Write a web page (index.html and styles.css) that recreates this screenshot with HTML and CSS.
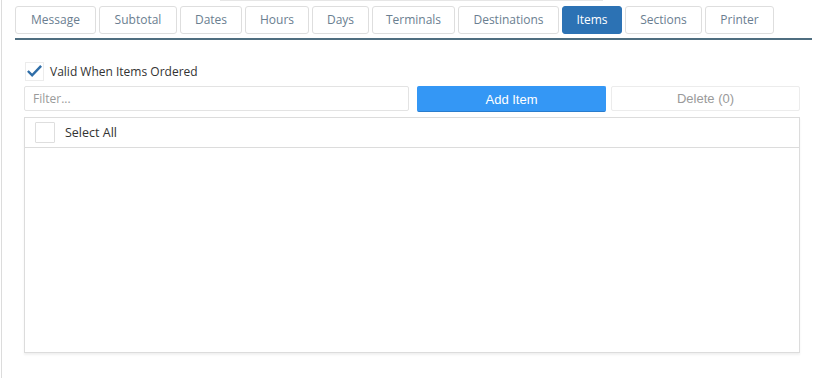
FILE: index.html
```html
<!DOCTYPE html>
<html lang="en">
<head>
    <meta charset="UTF-8">
    <meta name="viewport" content="width=device-width, initial-scale=1.0">
    <title>Items</title>
    <link rel="stylesheet" href="styles.css">
</head>
<body>
    <div class="page">
        <div class="top-edge"></div>
        <div class="tabs">
            <div class="tab">Message</div>
            <div class="tab">Subtotal</div>
            <div class="tab">Dates</div>
            <div class="tab">Hours</div>
            <div class="tab">Days</div>
            <div class="tab">Terminals</div>
            <div class="tab">Destinations</div>
            <div class="tab active">Items</div>
            <div class="tab">Sections</div>
            <div class="tab">Printer</div>
        </div>

        <div class="panel">
            <label class="check-row">
                <span class="check">
                    <svg width="18" height="16" viewBox="0 0 18 16"><path d="M2 8 L6.5 12.5 L16 2.5" fill="none" stroke="#2f6ea8" stroke-width="2.6"/></svg>
                </span>
                Valid When Items Ordered
            </label>

            <div class="toolbar">
                <input type="text" class="filter" placeholder="Filter...">
                <button class="btn btn-add">Add Item</button>
                <button class="btn btn-delete">Delete (0)</button>
            </div>

            <div class="list">
                <div class="list-head">
                    <span class="box"></span>
                    Select All
                </div>
                <div class="list-body"></div>
            </div>
        </div>
    </div>
</body>
</html>
```

FILE: styles.css
```css
body {
    margin: 0;
    padding: 0;
    font-family: "Open Sans", "Noto Sans", sans-serif;
    background: #fff;
}
.page {
    height: 378px;
    margin-left: 1px;
    border-left: 1px solid #dcdcdc;
    box-sizing: border-box;
}
.top-edge {
    height: 1px;
    width: 383px;
    margin-left: 218px;
    background: #e6e6e6;
}
.tabs {
    display: flex;
    gap: 3px;
    margin: 5px 11px 0 13px;
    padding-bottom: 4px;
    border-bottom: 2px solid #4f6e80;
}
.tab {
    height: 28px;
    line-height: 26px;
    box-sizing: border-box;
    padding: 0;
    border: 1px solid #dedede;
    border-radius: 3px;
    font-size: 12px;
    text-align: center;
    color: #6a7e90;
}
.tab:nth-child(1) { width: 81px; }
.tab:nth-child(2) { width: 78px; }
.tab:nth-child(3) { width: 62px; }
.tab:nth-child(4) { width: 64px; }
.tab:nth-child(5) { width: 57px; }
.tab:nth-child(6) { width: 83px; }
.tab:nth-child(7) { width: 101px; }
.tab:nth-child(8) { width: 60px; }
.tab:nth-child(9) { width: 77px; }
.tab:nth-child(10) { width: 69px; }
.tab.active {
    background: #2c72b4;
    border-color: #2c72b4;
    color: #fff;
}
.panel {
    padding: 0 0 0 22px;
    width: 776px;
}
.check-row {
    display: flex;
    align-items: center;
    gap: 6px;
    margin-top: 22px;
    height: 18px;
    font-size: 12px;
    color: #333;
}
.check {
    width: 19px;
    height: 19px;
    margin-left: 1px;
    box-sizing: border-box;
    border: 1px solid #ececec;
    display: flex;
    align-items: center;
    justify-content: center;
}
.toolbar {
    display: grid;
    grid-template-columns: 385px 189px 189px;
    column-gap: 8px;
    margin-top: 6px;
}
.toolbar .btn-delete {
    margin-left: -3px;
    width: 189px;
}
.filter {
    height: 25px;
    box-sizing: border-box;
    border: 1px solid #e3e3e3;
    border-radius: 2px;
    padding: 0 8px;
    font-family: "Open Sans", sans-serif;
    font-size: 12px;
    color: #333;
    outline: none;
}
.filter::placeholder {
    color: #9a9a9a;
}
.btn {
    height: 26px;
    box-sizing: border-box;
    font-family: "Liberation Sans", Arial, sans-serif;
    font-size: 13px;
    border-radius: 2px;
    cursor: pointer;
    appearance: none;
}
.btn-add {
    background: #3497f5;
    border: 1px solid #3497f5;
    border-bottom-color: #2a7ccc;
    color: #fff;
}
.btn-delete {
    background: #fff;
    border: 1px solid #ececec;
    color: #9a9a9a;
    height: 25px;
}
.list {
    margin-top: 5px;
    height: 236px;
    box-sizing: border-box;
    border: 1px solid #dcdcdc;
    box-shadow: 0 2px 2px rgba(0, 0, 0, 0.06);
    display: flex;
    flex-direction: column;
}
.list-head {
    height: 30px;
    box-sizing: border-box;
    border-bottom: 1px solid #dcdcdc;
    display: flex;
    align-items: center;
    gap: 10px;
    padding-left: 10px;
    font-size: 12.5px;
    color: #333;
}
.box {
    width: 20px;
    height: 21px;
    box-sizing: border-box;
    border: 1px solid #dedede;
    border-radius: 1px;
}
.list-body {
    flex: 1;
}
```
